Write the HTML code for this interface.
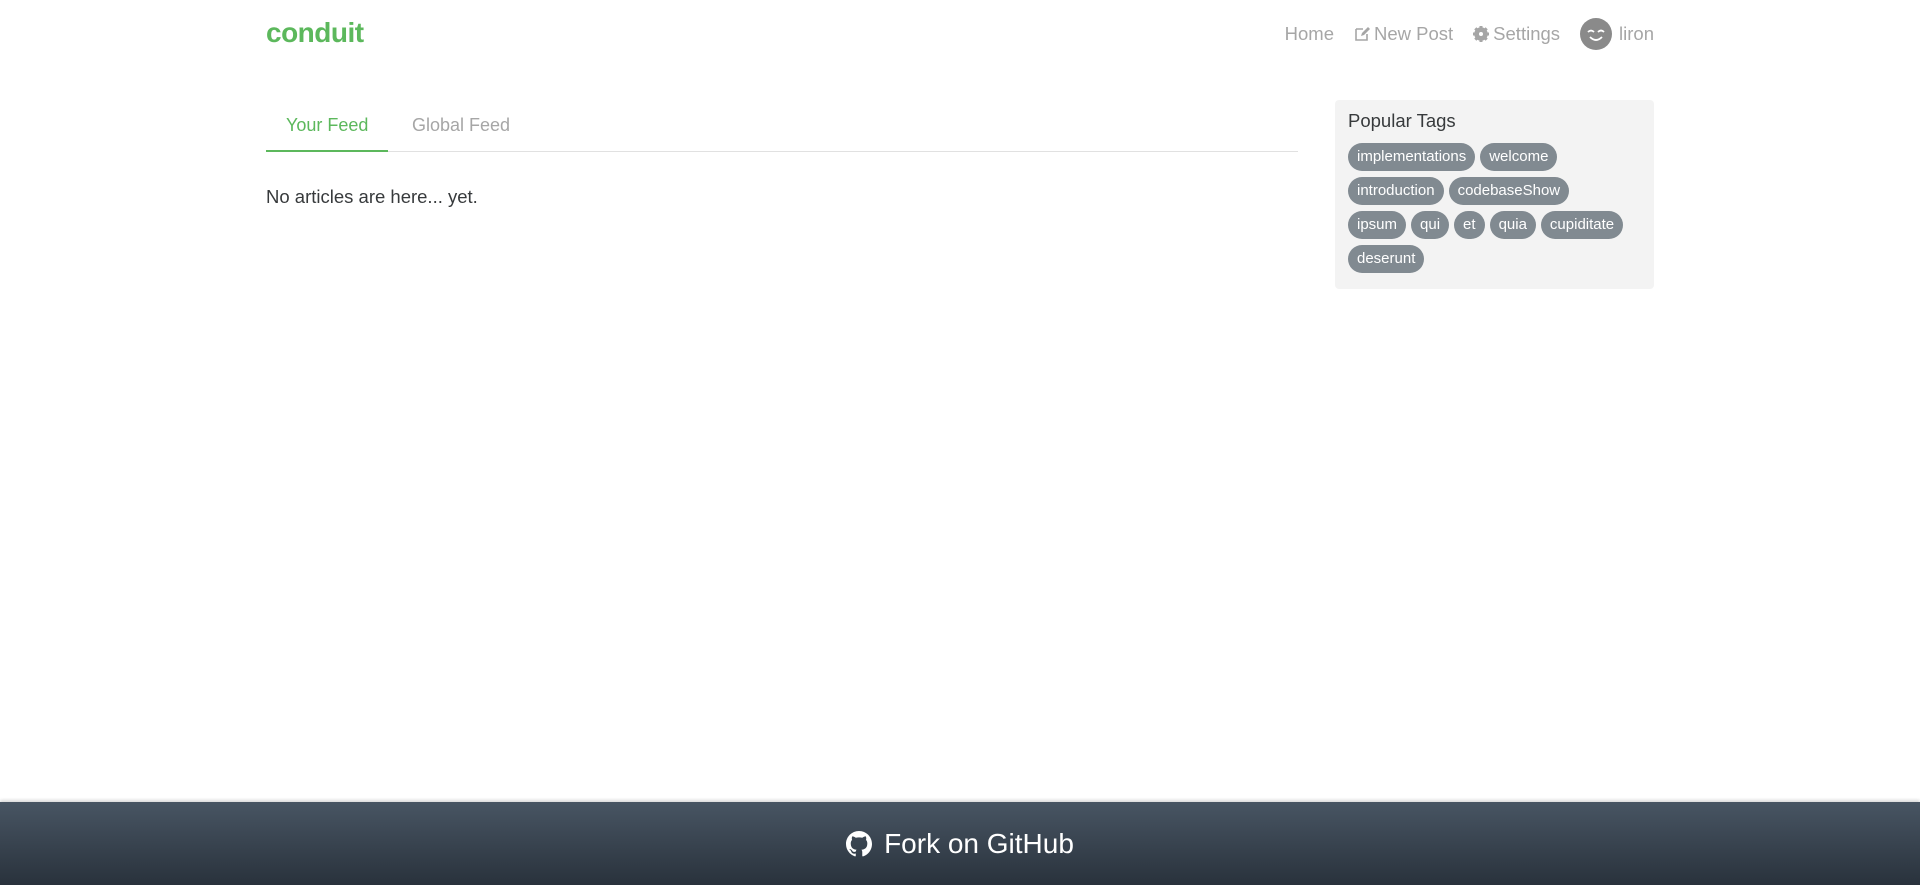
<!DOCTYPE html>
<html><head><meta charset="utf-8"><style>
*{box-sizing:border-box;margin:0;padding:0}
body{width:1920px;height:885px;position:relative;background:#fff;font-family:"Liberation Sans",sans-serif;overflow:hidden}
.logo{position:absolute;left:266px;top:17px;font-size:28px;font-weight:bold;color:#5cb85c;letter-spacing:-0.5px}
.nav{position:absolute;top:18px;right:266px;display:flex;align-items:center;font-size:18.5px;color:#a6a6a6}
.nav span{margin-left:20px;display:flex;align-items:center}
.av{width:32px;height:32px;border-radius:50%;background:#8a8a8a;margin-right:7px;display:inline-block;position:relative}
.tabs{position:absolute;left:266px;top:100px;width:1032px;height:52px;border-bottom:1px solid #e1e1e1}
.tab{position:absolute;top:0;padding-top:15px;font-size:18px;height:52px}
.t1{left:0;width:122px;border-bottom:2px solid #5cb85c;color:#5cb85c;padding-left:20px}
.t2{left:146px;color:#a6a6a6}
.none{position:absolute;left:266px;top:186px;font-size:18.5px;color:#373a3c}
.side{position:absolute;left:1335px;top:100px;width:319px;height:189px;background:#f3f3f3;border-radius:4px;padding:10px 13px}
.side h4{font-weight:normal;font-size:18.5px;color:#373a3c;margin-bottom:11px}
.row{display:flex;gap:5px;margin-bottom:6px}
.tg{background:#818a91;color:#fff;border-radius:14px;height:28px;line-height:28px;padding:0 9px;font-size:15px}
.foot{position:absolute;left:0;top:802px;width:1920px;height:83px;background:linear-gradient(#485563,#29323c);box-shadow:0 -2px 3px rgba(0,0,0,.15);display:flex;justify-content:center;align-items:center;color:#fff;font-size:28px}
</style></head><body>
<div class="logo">conduit</div>
<div class="nav">
<span>Home</span>
<span><svg width="16" height="16" viewBox="0 0 16 16" style="margin-right:4px"><path d="M2 3h7M2 3v11h11V8" fill="none" stroke="#a6a6a6" stroke-width="1.6"/><path d="M7 10l1-3 6-6 2 2-6 6z" fill="#a6a6a6"/></svg>New Post</span>
<span><svg width="16" height="16" viewBox="0 0 16 16" style="margin-right:4px"><circle cx="8" cy="8" r="5" fill="none" stroke="#a6a6a6" stroke-width="3.5"/><g stroke="#a6a6a6" stroke-width="3"><path d="M8 0v16M0 8h16M2.3 2.3l11.4 11.4M13.7 2.3L2.3 13.7"/></g><circle cx="8" cy="8" r="2" fill="#fff"/></svg>Settings</span>
<span><i class="av"><svg width="32" height="32" viewBox="0 0 32 32"><path d="M8 14q3-3 6 0M18 14q3-3 6 0M10 19q6 6 12 0" fill="none" stroke="#fff" stroke-width="1.8"/></svg></i>liron</span>
</div>
<div class="tabs"><div class="tab t1">Your Feed</div><div class="tab t2">Global Feed</div></div>
<div class="none">No articles are here... yet.</div>
<div class="side"><h4>Popular Tags</h4>
<div class="row"><span class="tg">implementations</span><span class="tg">welcome</span></div>
<div class="row"><span class="tg">introduction</span><span class="tg">codebaseShow</span></div>
<div class="row"><span class="tg">ipsum</span><span class="tg">qui</span><span class="tg">et</span><span class="tg">quia</span><span class="tg">cupiditate</span></div>
<div class="row"><span class="tg">deserunt</span></div></div>
<div class="foot"><svg width="26" height="26" viewBox="0 0 16 16" style="margin-right:12px"><path fill="#fff" d="M8 0C3.58 0 0 3.58 0 8c0 3.54 2.29 6.53 5.47 7.59.4.07.55-.17.55-.38v-1.33c-2.23.48-2.7-1.07-2.7-1.07-.36-.92-.89-1.17-.89-1.17-.73-.5.06-.49.06-.49.8.06 1.23.83 1.23.83.71 1.22 1.87.87 2.33.66.07-.52.28-.87.51-1.07-1.78-.2-3.64-.89-3.64-3.95 0-.87.31-1.59.82-2.15-.08-.2-.36-1.02.08-2.12 0 0 .67-.21 2.2.82a7.6 7.6 0 0 1 4 0c1.53-1.04 2.2-.82 2.2-.82.44 1.1.16 1.92.08 2.12.51.56.82 1.27.82 2.15 0 3.07-1.87 3.75-3.65 3.95.29.25.54.73.54 1.48v2.2c0 .21.15.46.55.38A8 8 0 0 0 16 8c0-4.42-3.58-8-8-8z"/></svg>Fork on GitHub</div>
</body></html>
